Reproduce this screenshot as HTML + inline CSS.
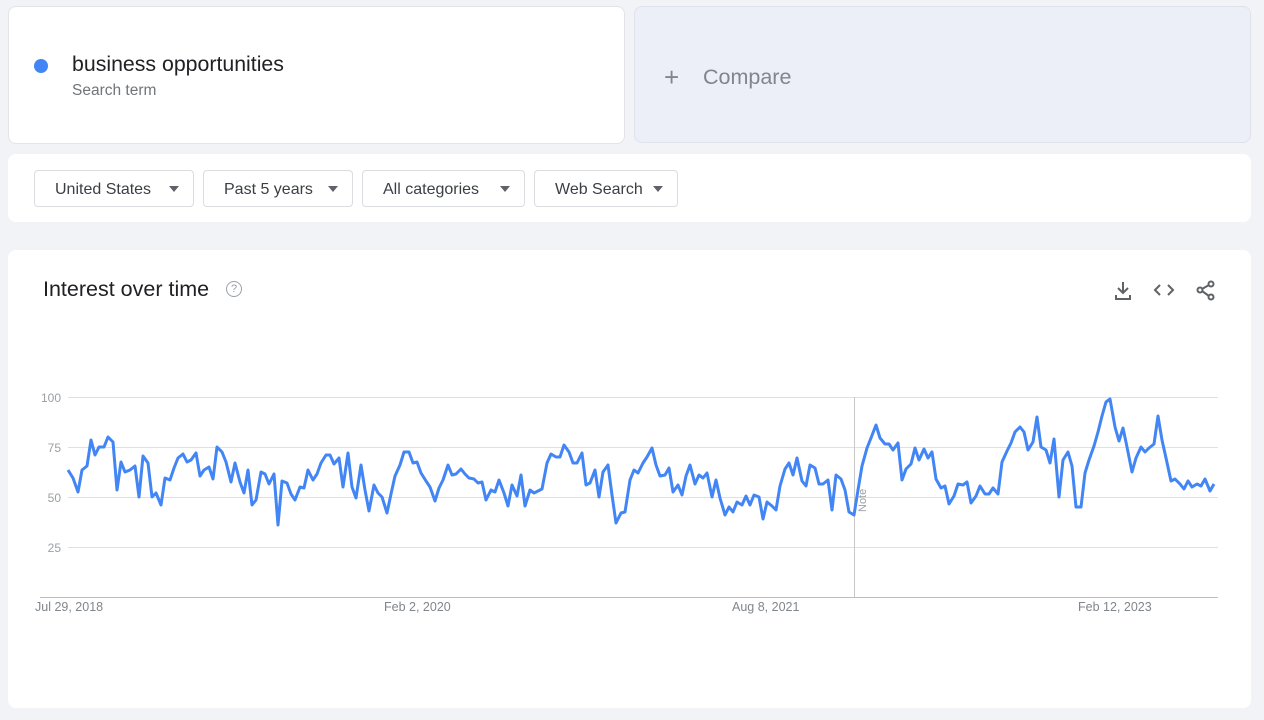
<!DOCTYPE html>
<html><head><meta charset="utf-8"><style>
body{margin:0;width:1264px;height:720px;background:#f1f3f6;font-family:"Liberation Sans",sans-serif;position:relative;overflow:hidden}
.card{position:absolute;background:#fff;border-radius:8px}
.btn{position:absolute;top:170px;height:37px;border:1px solid #dadce0;border-radius:4px;box-sizing:border-box;font-size:16px;color:#3c4043;line-height:37px;padding-left:20px}
.btn:after{content:"";position:absolute;right:14px;top:15px;border-left:5px solid transparent;border-right:5px solid transparent;border-top:6px solid #5f6368}
</style></head><body>
<div class="card" style="left:8px;top:6px;width:617px;height:138px;border:1px solid #e2e4e8;box-sizing:border-box"></div>
<div style="position:absolute;left:34px;top:59px;width:14px;height:14px;border-radius:50%;background:#4285f4"></div>
<div style="position:absolute;left:72px;top:52px;font-size:21.3px;color:#202124">business opportunities</div>
<div style="position:absolute;left:72px;top:82px;font-size:15.5px;color:#70757a">Search term</div>
<div class="card" style="left:634px;top:6px;width:617px;height:137px;background:#eceff8;border:1px solid #dfe2ea;box-sizing:border-box"></div>
<div style="position:absolute;left:664px;top:62px;font-size:26px;color:#80868b;font-weight:300">+</div>
<div style="position:absolute;left:703px;top:65px;font-size:21.5px;color:#80868b">Compare</div>
<div class="card" style="left:8px;top:154px;width:1243px;height:68px"></div>
<div class="btn" style="left:34px;width:160px">United States</div>
<div class="btn" style="left:203px;width:150px">Past 5 years</div>
<div class="btn" style="left:362px;width:163px">All categories</div>
<div class="btn" style="left:534px;width:144px">Web Search</div>
<div class="card" style="left:8px;top:250px;width:1243px;height:458px"></div>
<div style="position:absolute;left:43px;top:277px;font-size:21.5px;color:#202124">Interest over time</div>
<div style="position:absolute;left:226px;top:281px;width:14px;height:14px;border:1.5px solid #9aa0a6;border-radius:50%;font-size:11px;color:#9aa0a6;text-align:center;line-height:14px">?</div>
<svg style="position:absolute;left:1110px;top:278px" width="110" height="26" fill="none" stroke="#5f6368" stroke-width="2">
<path d="M13 4v11M8 10l5 5 5-5M6 17v4h14v-4"/>
<path d="M50 7l-5 5 5 5M58 7l5 5-5 5"/>
<circle cx="101" cy="6" r="2.5"/><circle cx="90" cy="12" r="2.5"/><circle cx="101" cy="19" r="2.5"/><path d="M92 11l7-4M92 13l7 5"/>
</svg>
<svg style="position:absolute;left:0;top:0" width="1264" height="720">
<g stroke="#e0e0e0" stroke-width="1"><line x1="68" y1="397.5" x2="1218" y2="397.5"/><line x1="68" y1="447.5" x2="1218" y2="447.5"/><line x1="68" y1="497.5" x2="1218" y2="497.5"/><line x1="68" y1="547.5" x2="1218" y2="547.5"/></g>
<line x1="40" y1="597.5" x2="1218" y2="597.5" stroke="#bdbdbd"/>
<line x1="854.5" y1="397" x2="854.5" y2="597" stroke="#c8c8c8"/>
<text x="866" y="512" font-size="11" fill="#9aa0a6" transform="rotate(-90 866 512)" font-family="Liberation Sans">Note</text>
<g font-size="12" fill="#9aa0a6" font-family="Liberation Sans" text-anchor="end"><text x="61" y="402">100</text><text x="61" y="452">75</text><text x="61" y="502">50</text><text x="61" y="552">25</text></g>
<polyline fill="none" stroke="#4285f4" stroke-width="3" stroke-linejoin="round" points="68,470 73,478 78,492 82,470 87,466 91,440 95,455 99,447 104,447 108,437 113,442 117,490 121,462 125,472 130,470 135,466 139,497 143,456 148,463 152,497 156,493 161,505 165,478 170,480 174,468 178,458 183,454 187,462 191,460 196,453 200,476 204,470 209,467 213,479 217,447 222,452 226,462 231,482 235,463 240,482 244,493 248,470 252,505 256,500 261,472 265,474 269,484 274,474 278,525 282,481 287,483 291,494 295,500 300,487 304,488 308,470 313,480 317,474 321,463 326,455 330,455 334,464 339,458 343,487 348,453 352,487 356,498 361,465 365,490 369,511 374,485 378,493 382,497 387,513 391,494 395,476 400,465 404,452 409,452 413,463 417,462 421,473 426,481 430,487 435,501 439,488 443,480 448,465 452,475 456,474 461,469 465,474 469,478 474,479 478,483 482,482 486,500 491,490 495,492 499,480 504,493 508,506 512,485 517,496 521,475 525,506 530,490 534,493 538,491 542,489 547,463 551,454 556,457 560,457 564,445 569,452 573,463 577,463 582,453 586,485 590,483 595,470 599,497 603,472 608,465 612,495 616,523 621,513 625,512 630,480 634,470 638,473 643,463 647,457 652,448 656,465 660,476 665,475 669,468 673,492 678,485 682,495 686,476 690,465 695,484 699,475 703,478 707,473 712,497 716,480 720,498 725,515 729,507 733,512 737,502 742,505 746,496 750,505 754,495 759,497 763,519 767,502 772,506 776,510 780,486 785,469 789,463 793,475 797,458 802,481 806,486 810,465 815,468 819,484 823,484 828,480 832,510 836,475 841,479 845,490 849,512 854,515 858,490 862,466 867,448 871,438 876,425 880,438 885,444 889,444 893,450 898,443 902,480 906,469 911,464 915,448 919,460 924,449 928,458 932,452 936,479 941,488 945,486 949,504 954,496 958,484 963,485 967,482 971,503 976,496 980,486 985,494 989,494 993,488 998,494 1002,462 1007,451 1011,443 1015,432 1020,427 1024,432 1028,450 1033,442 1037,417 1041,447 1046,450 1050,463 1054,439 1059,497 1063,460 1068,452 1072,466 1076,507 1081,507 1085,473 1089,460 1094,446 1098,432 1102,416 1106,402 1110,399 1115,427 1119,441 1123,428 1127,447 1132,472 1136,458 1141,447 1145,452 1149,448 1154,444 1158,416 1162,440 1166,458 1171,481 1175,479 1180,484 1184,489 1188,481 1192,487 1197,484 1201,486 1205,479 1210,491 1214,484"/>
<g font-size="12.5" fill="#80868b" font-family="Liberation Sans"><text x="35" y="611">Jul 29, 2018</text><text x="384" y="611">Feb 2, 2020</text><text x="732" y="611">Aug 8, 2021</text><text x="1078" y="611">Feb 12, 2023</text></g>
</svg>
</body></html>
